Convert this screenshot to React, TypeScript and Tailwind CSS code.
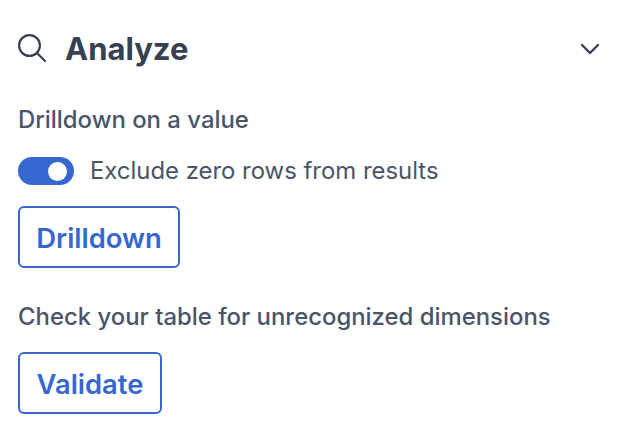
import React from "react";

export default function App() {
  return (
    <div className="w-[632px] h-[428px] bg-white pl-[18px] pr-[32px] pt-[28px] font-['Inter',sans-serif] overflow-hidden">
      <div className="flex items-center justify-between h-[42px]">
        <div className="flex items-center gap-[17px]">
          <svg width="30" height="30" viewBox="0 0 30 30" fill="none" stroke="#364152" strokeWidth="2.2" strokeLinecap="round">
            <circle cx="11.5" cy="11.5" r="10.4" />
            <path d="M19.5 19.5L27 27" />
          </svg>
          <span className="text-[31px] leading-[42px] font-bold text-[#364152]">Analyze</span>
        </div>
        <svg width="20" height="12" viewBox="0 0 20 12" fill="none" stroke="#364152" strokeWidth="2.4" strokeLinecap="round" strokeLinejoin="round">
          <path d="M2 2l8 8 8-8" />
        </svg>
      </div>
      <p className="mt-[34px] text-[23.9px] leading-[32px] font-medium text-[#4a5568]">Drilldown on a value</p>
      <div className="mt-[19px] flex items-center gap-[16px]">
        <div className="w-[56px] h-[28px] rounded-full bg-[#3767d0] flex items-center justify-end pr-[7px]">
          <div className="w-[19px] h-[19px] rounded-full bg-white" />
        </div>
        <span className="text-[23.9px] leading-[32px] text-[#4a5568]">Exclude zero rows from results</span>
      </div>
      <button className="mt-[19px] block h-[62px] w-[162px] pt-[3px] rounded-[6px] border-2 border-[#3767d0] text-[#3767d0] text-[27.4px] font-semibold">Drilldown</button>
      <p className="mt-[33px] text-[23.9px] leading-[32px] font-medium text-[#4a5568]">Check your table for unrecognized dimensions</p>
      <button className="mt-[19px] block h-[62px] w-[144px] pt-[3px] rounded-[6px] border-2 border-[#3767d0] text-[#3767d0] text-[27.4px] font-semibold">Validate</button>
    </div>
  );
}
